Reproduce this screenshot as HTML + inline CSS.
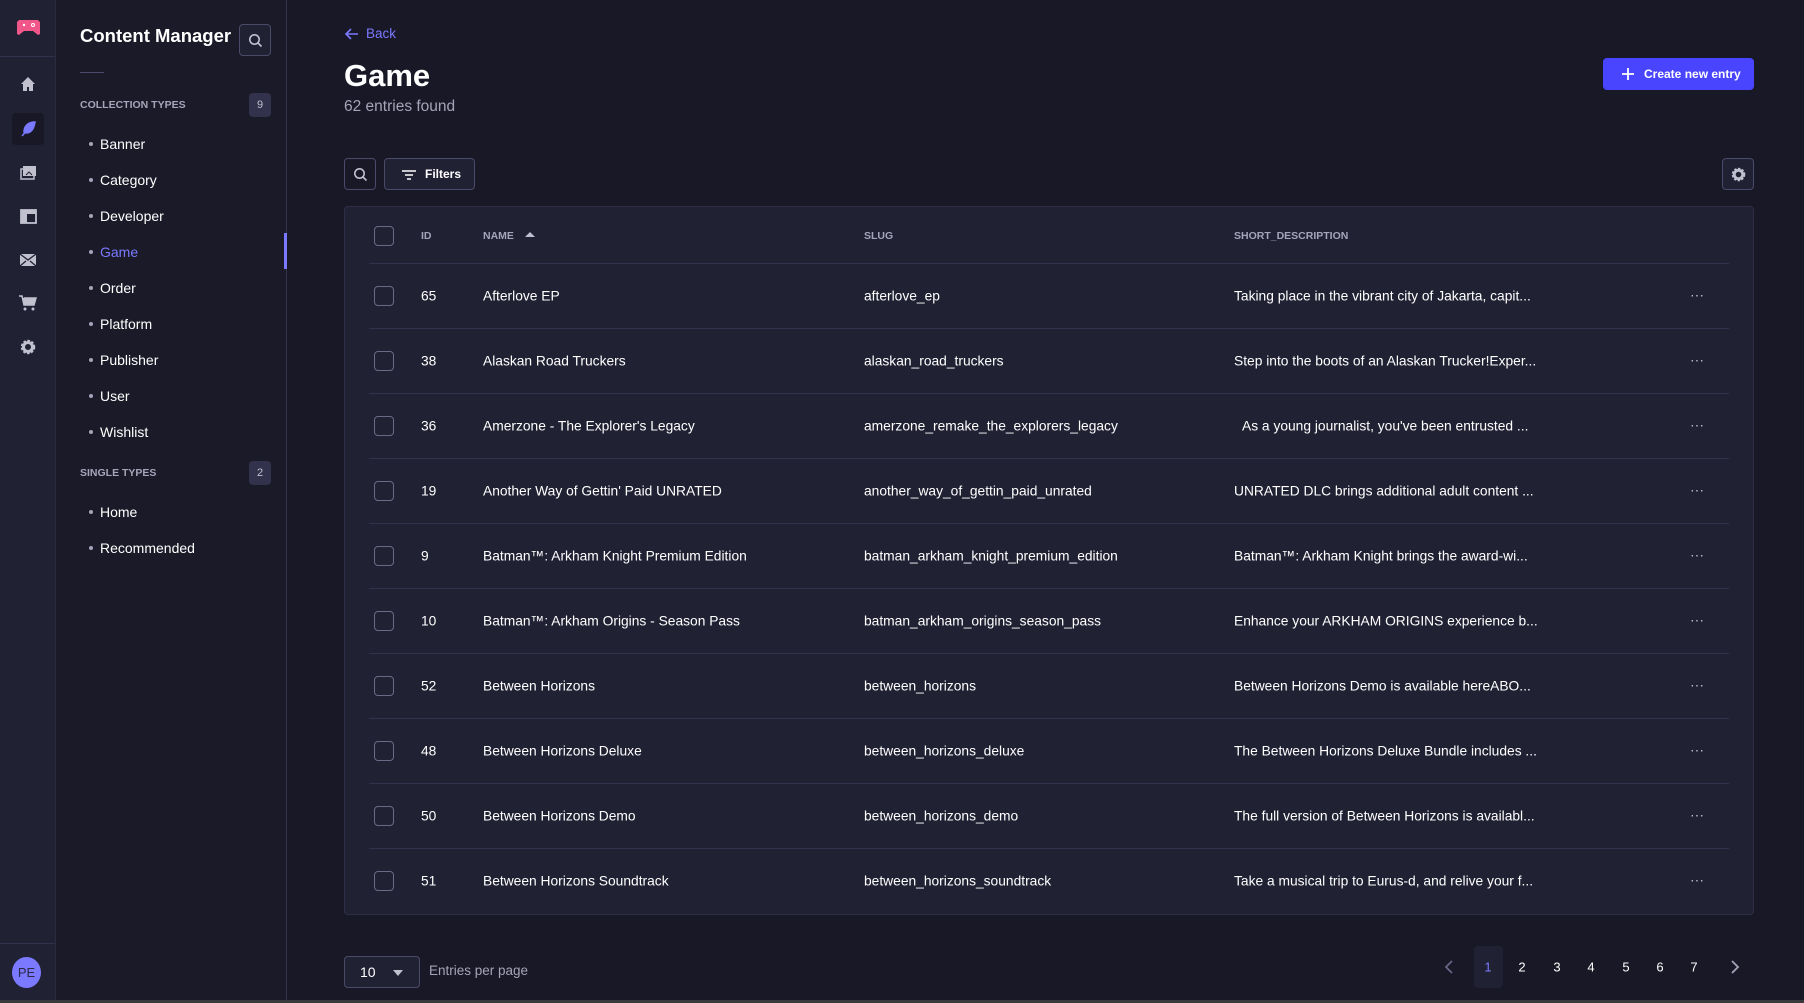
<!DOCTYPE html>
<html><head><meta charset="utf-8"><style>
*{box-sizing:border-box;margin:0;padding:0}
body{width:1804px;height:1003px;background:#181826;font-family:"Liberation Sans",sans-serif;color:#fff;position:relative;overflow:hidden}
.a{position:absolute}
.nav{left:0;top:0;width:56px;height:1000px;background:#212134;border-right:1px solid #2b2b40}
.sub{left:56px;top:0;width:231px;height:1000px;background:#1a1a28;border-right:1px solid #32324d}
.it{position:absolute;left:100px;font-size:14px;color:#fff;transform:translateY(-50%);margin-top:1px}
.it:before{content:"";position:absolute;left:-11px;top:50%;width:4px;height:4px;margin-top:-2px;border-radius:50%;background:#a5a5ba}
.sec{position:absolute;left:80px;font-size:10.5px;font-weight:bold;color:#a5a5ba;transform:translateY(-50%)}
.badge{position:absolute;left:249px;width:22px;height:24px;border-radius:4px;background:#32324d;color:#c0c0cf;font-size:11px;text-align:center;line-height:24px}
.btn{position:absolute;border:1px solid #4a4a6a;border-radius:4px;background:#212134}
.tbl{left:344px;top:206px;width:1410px;height:709px;background:#212134;border:1px solid #2e2e48;border-radius:4px}
.sep{position:absolute;left:24px;width:1360px;height:1px;background:#32324d}
.cb{position:absolute;left:29px;width:20px;height:20px;border:1px solid #6a6a86;border-radius:4px;transform:translateY(-50%)}
.c{position:absolute;font-size:13.8px;color:#fff;transform:translateY(-50%);white-space:nowrap}
.h{font-size:10.5px;font-weight:bold;color:#a5a5ba}
.dots{position:absolute;left:1345px;color:#c0c0cf;font-size:14px;transform:translateY(-60%)}
.pg{position:absolute;top:967px;font-size:13px;transform:translate(-50%,-50%)}
</style></head><body>
<div class="a nav">
 <div class="a" style="left:0;top:56px;width:55px;height:1px;background:#32324d"></div>
 <svg class="a" style="left:16px;top:19px" width="25" height="17" viewBox="0 0 25 17"><path d="M3 1h19l2 2v12l-2 1-5-4h-9l-5 4-2-1V3z" fill="#f0568a"/><circle cx="8" cy="6" r="1.2" fill="#fff"/><circle cx="17" cy="6" r="1.5" fill="none" stroke="#fff"/></svg>
 <svg class="a" style="left:20px;top:76px" width="16" height="16" viewBox="0 0 16 16"><path d="M8 1 1 8h2v7h4v-4h2v4h4V8h2z" fill="#c0c0cf"/></svg>
 <div class="a" style="left:12px;top:113px;width:32px;height:32px;border-radius:4px;background:#181826"></div>
 <svg class="a" style="left:20px;top:120px" width="17" height="17" viewBox="0 0 17 17"><path d="M2 16 9 8M4 12c0-6 4-10 11-10-1 6-3 11-9 11z" fill="#7b79ff" stroke="#7b79ff" stroke-width="1.5"/></svg>
 <svg class="a" style="left:20px;top:165px" width="17" height="15" viewBox="0 0 17 15"><rect x="3" y="1" width="13" height="10" fill="#c0c0cf"/><rect x="1" y="4" width="13" height="10" fill="none" stroke="#c0c0cf" stroke-width="1.5"/><path d="M6 10l3-3 3 3" stroke="#212134" fill="none"/></svg>
 <svg class="a" style="left:20px;top:209px" width="17" height="15" viewBox="0 0 17 15"><rect x="1" y="1" width="15" height="13" fill="none" stroke="#c0c0cf" stroke-width="1.8"/><rect x="1" y="1" width="15" height="4" fill="#c0c0cf"/><rect x="1" y="5" width="6" height="9" fill="#c0c0cf"/></svg>
 <svg class="a" style="left:19px;top:253px" width="18" height="14" viewBox="0 0 18 14"><rect x="1" y="1" width="16" height="12" fill="#c0c0cf"/><path d="M1 1l8 6 8-6M1 13l6-5M17 13l-6-5" stroke="#212134" fill="none" stroke-width="1.3"/></svg>
 <svg class="a" style="left:19px;top:295px" width="18" height="16" viewBox="0 0 18 16"><path d="M0 1h3l2 9h10l2-7H5" fill="#c0c0cf" stroke="#c0c0cf" stroke-width="1.5"/><circle cx="6" cy="14" r="1.5" fill="#c0c0cf"/><circle cx="14" cy="14" r="1.5" fill="#c0c0cf"/></svg>
 <svg class="a" style="left:20px;top:339px" width="16" height="16" viewBox="0 0 16 16"><circle cx="8" cy="8" r="5.5" fill="none" stroke="#c0c0cf" stroke-width="3.5" stroke-dasharray="2.2 1.4"/><circle cx="8" cy="8" r="4.5" fill="none" stroke="#c0c0cf" stroke-width="3"/></svg>
 <div class="a" style="left:0;top:943px;width:55px;height:1px;background:#32324d"></div>
 <div class="a" style="left:12px;top:957px;width:29px;height:31px;border-radius:50%;background:#7b79ff;color:#2a2a48;font-size:13px;text-align:center;line-height:31px">PE</div>
</div>
<div class="a sub">
 <div class="a" style="left:24px;top:25px;font-size:18.5px;font-weight:bold">Content Manager</div>
 <div class="btn" style="left:183px;top:24px;width:32px;height:32px;background:#212134"><svg style="position:absolute;left:8px;top:8px" width="15" height="15" viewBox="0 0 15 15"><circle cx="6.5" cy="6.5" r="4.7" fill="none" stroke="#c0c0cf" stroke-width="1.6"/><path d="M10 10l3.5 3.5" stroke="#c0c0cf" stroke-width="1.6"/></svg></div>
 <div class="a" style="left:24px;top:72px;width:24px;height:1px;background:#4a4a6a"></div>
</div>
<div class="sec" style="top:105px">COLLECTION TYPES</div><div class="badge" style="top:93px">9</div>
<div class="it" style="top:143px">Banner</div>
<div class="it" style="top:179px">Category</div>
<div class="it" style="top:215px">Developer</div>
<div class="it" style="top:251px;color:#7b79ff">Game</div>
<div class="a" style="left:284px;top:233px;width:3px;height:36px;background:#7b79ff"></div>
<div class="it" style="top:287px">Order</div>
<div class="it" style="top:323px">Platform</div>
<div class="it" style="top:359px">Publisher</div>
<div class="it" style="top:395px">User</div>
<div class="it" style="top:431px">Wishlist</div>
<div class="sec" style="top:473px">SINGLE TYPES</div><div class="badge" style="top:461px">2</div>
<div class="it" style="top:511px">Home</div>
<div class="it" style="top:547px">Recommended</div>

<svg class="a" style="left:345px;top:28px" width="14" height="12" viewBox="0 0 14 12"><path d="M13 6H2M6 1 1 6l5 5" stroke="#7b79ff" stroke-width="1.6" fill="none"/></svg>
<div class="a" style="left:366px;top:26px;font-size:13.5px;color:#7b79ff">Back</div>
<div class="a" style="left:344px;top:58px;font-size:31px;font-weight:bold">Game</div>
<div class="a" style="left:344px;top:98px;font-size:15.5px;color:#a5a5ba">62 entries found</div>
<div class="a" style="left:1603px;top:58px;width:151px;height:32px;border-radius:4px;background:#4945ff;font-size:12px;font-weight:bold;line-height:32px;padding-left:41px">Create new entry</div>
<svg class="a" style="left:1621px;top:67px" width="14" height="14" viewBox="0 0 14 14"><path d="M7 1v12M1 7h12" stroke="#fff" stroke-width="1.8"/></svg>

<div class="btn" style="left:344px;top:158px;width:32px;height:32px;background:#181826"><svg style="position:absolute;left:8px;top:8px" width="15" height="15" viewBox="0 0 15 15"><circle cx="6.5" cy="6.5" r="4.7" fill="none" stroke="#c0c0cf" stroke-width="1.6"/><path d="M10 10l3.5 3.5" stroke="#c0c0cf" stroke-width="1.6"/></svg></div>
<div class="btn" style="left:384px;top:158px;width:91px;height:32px;background:#212134"><svg style="position:absolute;left:17px;top:11px" width="14" height="10" viewBox="0 0 14 10"><path d="M0 1h14M3 5h8M5 9h4" stroke="#fff" stroke-width="1.6"/></svg><span style="position:absolute;left:40px;top:8px;font-size:12px;font-weight:bold">Filters</span></div>
<div class="btn" style="left:1722px;top:158px;width:32px;height:32px;background:#212134"><svg style="position:absolute;left:8px;top:8px" width="15" height="15" viewBox="0 0 16 16"><circle cx="8" cy="8" r="5.5" fill="none" stroke="#c0c0cf" stroke-width="3.5" stroke-dasharray="2.2 1.4"/><circle cx="8" cy="8" r="4.5" fill="none" stroke="#c0c0cf" stroke-width="3"/></svg></div>

<div class="a tbl">
 <div class="cb" style="top:29px"></div>
 <div class="c h" style="left:76px;top:29px">ID</div>
 <div class="c h" style="left:138px;top:29px">NAME <span style="display:inline-block;margin-left:8px;border-left:5px solid transparent;border-right:5px solid transparent;border-bottom:5px solid #c0c0cf;vertical-align:2px"></span></div>
 <div class="c h" style="left:519px;top:29px">SLUG</div>
 <div class="c h" style="left:889px;top:29px">SHORT_DESCRIPTION</div>
 <div class="sep" style="top:56px"></div>

 <div class="cb" style="top:89px"></div><div class="c" style="left:76px;top:89px">65</div><div class="c" style="left:138px;top:89px">Afterlove EP</div><div class="c" style="left:519px;top:89px">afterlove_ep</div><div class="c" style="left:889px;top:89px">Taking place in the vibrant city of Jakarta, capit...</div><div class="dots" style="top:89px">···</div>
 <div class="sep" style="top:121px"></div>
 <div class="cb" style="top:154px"></div><div class="c" style="left:76px;top:154px">38</div><div class="c" style="left:138px;top:154px">Alaskan Road Truckers</div><div class="c" style="left:519px;top:154px">alaskan_road_truckers</div><div class="c" style="left:889px;top:154px">Step into the boots of an Alaskan Trucker!Exper...</div><div class="dots" style="top:154px">···</div>
 <div class="sep" style="top:186px"></div>
 <div class="cb" style="top:219px"></div><div class="c" style="left:76px;top:219px">36</div><div class="c" style="left:138px;top:219px">Amerzone - The Explorer's Legacy</div><div class="c" style="left:519px;top:219px">amerzone_remake_the_explorers_legacy</div><div class="c" style="left:897px;top:219px">As a young journalist, you've been entrusted ...</div><div class="dots" style="top:219px">···</div>
 <div class="sep" style="top:251px"></div>
 <div class="cb" style="top:284px"></div><div class="c" style="left:76px;top:284px">19</div><div class="c" style="left:138px;top:284px">Another Way of Gettin' Paid UNRATED</div><div class="c" style="left:519px;top:284px">another_way_of_gettin_paid_unrated</div><div class="c" style="left:889px;top:284px">UNRATED DLC brings additional adult content ...</div><div class="dots" style="top:284px">···</div>
 <div class="sep" style="top:316px"></div>
 <div class="cb" style="top:349px"></div><div class="c" style="left:76px;top:349px">9</div><div class="c" style="left:138px;top:349px">Batman™: Arkham Knight Premium Edition</div><div class="c" style="left:519px;top:349px">batman_arkham_knight_premium_edition</div><div class="c" style="left:889px;top:349px">Batman™: Arkham Knight brings the award-wi...</div><div class="dots" style="top:349px">···</div>
 <div class="sep" style="top:381px"></div>
 <div class="cb" style="top:414px"></div><div class="c" style="left:76px;top:414px">10</div><div class="c" style="left:138px;top:414px">Batman™: Arkham Origins - Season Pass</div><div class="c" style="left:519px;top:414px">batman_arkham_origins_season_pass</div><div class="c" style="left:889px;top:414px">Enhance your ARKHAM ORIGINS experience b...</div><div class="dots" style="top:414px">···</div>
 <div class="sep" style="top:446px"></div>
 <div class="cb" style="top:479px"></div><div class="c" style="left:76px;top:479px">52</div><div class="c" style="left:138px;top:479px">Between Horizons</div><div class="c" style="left:519px;top:479px">between_horizons</div><div class="c" style="left:889px;top:479px">Between Horizons Demo is available hereABO...</div><div class="dots" style="top:479px">···</div>
 <div class="sep" style="top:511px"></div>
 <div class="cb" style="top:544px"></div><div class="c" style="left:76px;top:544px">48</div><div class="c" style="left:138px;top:544px">Between Horizons Deluxe</div><div class="c" style="left:519px;top:544px">between_horizons_deluxe</div><div class="c" style="left:889px;top:544px">The Between Horizons Deluxe Bundle includes ...</div><div class="dots" style="top:544px">···</div>
 <div class="sep" style="top:576px"></div>
 <div class="cb" style="top:609px"></div><div class="c" style="left:76px;top:609px">50</div><div class="c" style="left:138px;top:609px">Between Horizons Demo</div><div class="c" style="left:519px;top:609px">between_horizons_demo</div><div class="c" style="left:889px;top:609px">The full version of Between Horizons is availabl...</div><div class="dots" style="top:609px">···</div>
 <div class="sep" style="top:641px"></div>
 <div class="cb" style="top:674px"></div><div class="c" style="left:76px;top:674px">51</div><div class="c" style="left:138px;top:674px">Between Horizons Soundtrack</div><div class="c" style="left:519px;top:674px">between_horizons_soundtrack</div><div class="c" style="left:889px;top:674px">Take a musical trip to Eurus-d, and relive your f...</div><div class="dots" style="top:674px">···</div>
</div>

<div class="btn" style="left:344px;top:956px;width:76px;height:32px;background:#212134"><span style="position:absolute;left:15px;top:7px;font-size:14px">10</span><span style="position:absolute;left:48px;top:13px;border-left:5px solid transparent;border-right:5px solid transparent;border-top:6px solid #c0c0cf"></span></div>
<div class="a" style="left:429px;top:963px;font-size:13.5px;color:#a5a5ba">Entries per page</div>

<svg class="a" style="left:1444px;top:960px" width="10" height="14" viewBox="0 0 10 14"><path d="M8 1 2 7l6 6" stroke="#666687" stroke-width="1.8" fill="none"/></svg>
<div class="a" style="left:1474px;top:946px;width:29px;height:42px;border-radius:4px;background:#212134"></div>
<div class="pg" style="left:1488px;color:#7b79ff">1</div>
<div class="pg" style="left:1522px">2</div>
<div class="pg" style="left:1557px">3</div>
<div class="pg" style="left:1591px">4</div>
<div class="pg" style="left:1626px">5</div>
<div class="pg" style="left:1660px">6</div>
<div class="pg" style="left:1694px">7</div>
<svg class="a" style="left:1730px;top:960px" width="10" height="14" viewBox="0 0 10 14"><path d="M2 1l6 6-6 6" stroke="#a5a5ba" stroke-width="1.8" fill="none"/></svg>
<div class="a" style="left:0;top:1000px;width:1804px;height:3px;background:#3a3a3e"></div>
</body></html>
